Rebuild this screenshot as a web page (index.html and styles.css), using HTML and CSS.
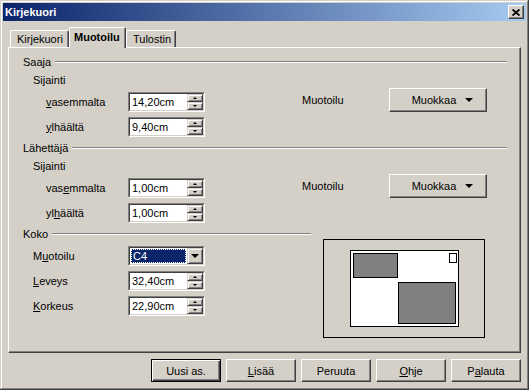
FILE: index.html
```html
<!DOCTYPE html>
<html lang="fi">
<head>
  <meta charset="UTF-8" />
  <title>Kirjekuori</title>
  <link rel="stylesheet" href="styles.css">
</head>
<body>

  <div class="window">
    <div class="titlebar">
      <span class="title">Kirjekuori</span>
      <span class="close-btn">
        <svg width="8" height="7" viewBox="0 0 8 7">
          <path d="M0.5 0.5 L7.5 6.5 M7.5 0.5 L0.5 6.5" stroke="#000" stroke-width="1.8" fill="none"/>
        </svg>
      </span>
    </div>

    <div class="content">
      <!-- Tabs -->
      <div class="tabs">
        <div class="tab">Kirjekuori</div>
        <div class="tab active">Muotoilu</div>
        <div class="tab">Tulostin</div>
      </div>

      <div class="panel">
        <!-- Saaja -->
        <div class="group">
          <div class="group-title"><span>Saaja</span></div>
          <div class="group-body">
            <div class="fields">
              <div class="sub">Sijainti</div>
              <div class="row">
                <span class="row-label"><u>v</u>asemmalta</span>
                <div class="spin"><div class="spin-inner">
                  <span class="spin-value">14,20cm</span>
                  <span class="spin-btns"><span class="spin-up"><i></i></span><span class="spin-down"><i></i></span></span>
                </div></div>
              </div>
              <div class="row">
                <span class="row-label"><u>y</u>lhäältä</span>
                <div class="spin"><div class="spin-inner">
                  <span class="spin-value">9,40cm</span>
                  <span class="spin-btns"><span class="spin-up"><i></i></span><span class="spin-down"><i></i></span></span>
                </div></div>
              </div>
            </div>
            <div class="side">
              <span class="side-label">Muotoilu</span>
              <div class="btn menu-btn"><span>Muokkaa</span><i class="menu-arrow"></i></div>
            </div>
          </div>
        </div>

        <!-- Lähettäjä -->
        <div class="group">
          <div class="group-title"><span>Lähettäjä</span></div>
          <div class="group-body">
            <div class="fields">
              <div class="sub">Sijainti</div>
              <div class="row">
                <span class="row-label">vas<u>e</u>mmalta</span>
                <div class="spin"><div class="spin-inner">
                  <span class="spin-value">1,00cm</span>
                  <span class="spin-btns"><span class="spin-up"><i></i></span><span class="spin-down"><i></i></span></span>
                </div></div>
              </div>
              <div class="row">
                <span class="row-label">yl<u>h</u>äältä</span>
                <div class="spin"><div class="spin-inner">
                  <span class="spin-value">1,00cm</span>
                  <span class="spin-btns"><span class="spin-up"><i></i></span><span class="spin-down"><i></i></span></span>
                </div></div>
              </div>
            </div>
            <div class="side">
              <span class="side-label">Muotoilu</span>
              <div class="btn menu-btn"><span>Muokkaa</span><i class="menu-arrow"></i></div>
            </div>
          </div>
        </div>

        <!-- Koko -->
        <div class="group size-group">
          <div class="size-fields">
            <div class="group-title"><span>Koko</span></div>
            <div class="row size-row">
              <span class="row-label">M<u>u</u>otoilu</span>
              <div class="spin"><div class="spin-inner">
                <span class="combo-value"><span>C4</span></span>
                <span class="combo-btn"><i></i></span>
              </div></div>
            </div>
            <div class="row size-row">
              <span class="row-label"><u>L</u>eveys</span>
              <div class="spin"><div class="spin-inner">
                <span class="spin-value">32,40cm</span>
                <span class="spin-btns"><span class="spin-up"><i></i></span><span class="spin-down"><i></i></span></span>
              </div></div>
            </div>
            <div class="row size-row">
              <span class="row-label"><u>K</u>orkeus</span>
              <div class="spin"><div class="spin-inner">
                <span class="spin-value">22,90cm</span>
                <span class="spin-btns"><span class="spin-up"><i></i></span><span class="spin-down"><i></i></span></span>
              </div></div>
            </div>
          </div>

          <div class="preview">
            <div class="envelope">
              <div class="env-sender"></div>
              <div class="env-stamp"></div>
              <div class="env-recipient"></div>
            </div>
          </div>
        </div>
      </div>

      <!-- Dialog buttons -->
      <div class="footer">
        <div class="btn dlg-btn default">Uusi as.</div>
        <div class="btn dlg-btn"><u>L</u>isää</div>
        <div class="btn dlg-btn">Peruuta</div>
        <div class="btn dlg-btn"><u>O</u>hje</div>
        <div class="btn dlg-btn">P<u>a</u>lauta</div>
      </div>
    </div>
  </div>

</body>
</html>
```

FILE: styles.css
```css
body {
  margin: 0;
  font-family: "Liberation Sans", Arial, sans-serif;
  font-size: 11px;
  color: #000;
  background: #d4d0c8;
}
u {
  text-decoration: underline;
  text-underline-offset: 1px;
}

.window {
  width: 529px;
  height: 390px;
  box-sizing: border-box;
  padding: 3px;
  background: #d4d0c8;
  box-shadow: inset -1px -1px #404040, inset 1px 1px #d4d0c8, inset -2px -2px #808080, inset 2px 2px #fff;
  display: flex;
  flex-direction: column;
}

/* title bar */
.titlebar {
  height: 18px;
  flex: none;
  display: flex;
  align-items: center;
  justify-content: space-between;
  padding: 0 2px 0 2px;
  background: linear-gradient(to right, #0a246a, #a6caf0);
}
.title {
  color: #fff;
  font-weight: bold;
}
.close-btn {
  width: 14px;
  height: 12px;
  display: flex;
  align-items: center;
  justify-content: center;
  background: #d4d0c8;
  border: 1px solid;
  border-color: #fff #404040 #404040 #fff;
  box-shadow: inset -1px -1px #808080;
}

.content {
  flex: 1;
  display: flex;
  flex-direction: column;
  padding: 0 5px;
}

/* tabs */
.tabs {
  height: 26px;
  flex: none;
  display: flex;
  align-items: flex-end;
  padding-left: 2px;
}
.tab {
  height: 17px;
  line-height: 17px;
  padding: 0 6px;
  box-sizing: border-box;
  border: 1px solid;
  border-bottom: none;
  border-color: #fff #404040 transparent #fff;
  border-radius: 2px 2px 0 0;
  box-shadow: inset -1px 0 #808080;
}
.tab:nth-child(1) { width: 59px; }
.tab:nth-child(3) { width: 50px; }
.tab.active {
  width: 57px;
  height: 21px;
  line-height: 19px;
  margin-bottom: -1px;
  padding: 0 4px;
  font-weight: bold;
  background: #d4d0c8;
  position: relative;
  z-index: 1;
}

/* panel */
.panel {
  height: 306px;
  flex: none;
  box-sizing: border-box;
  padding: 5px 13px 0 14px;
  border: 1px solid;
  border-color: #fff #404040 #404040 #fff;
  box-shadow: inset -1px -1px #808080;
}

.group-title {
  height: 18px;
  display: flex;
  align-items: center;
}
.group-title::after {
  content: "";
  flex: 1;
  height: 1px;
  margin-left: 4px;
  border-top: 1px solid #808080;
  border-bottom: 1px solid #fff;
  height: 0;
}
.group-body {
  display: flex;
}
.fields {
  width: 279px;
  flex: none;
}
.sub {
  height: 18px;
  line-height: 18px;
  padding-left: 10px;
}
.row {
  height: 25px;
  display: flex;
  align-items: center;
  padding-left: 23px;
}
.row-label {
  width: 82px;
  flex: none;
}

/* spin field */
.spin {
  width: 77px;
  height: 20px;
  box-sizing: border-box;
  border: 1px solid;
  border-color: #808080 #fff #fff #808080;
}
.spin-inner {
  height: 100%;
  box-sizing: border-box;
  border: 1px solid;
  border-color: #404040 #d4d0c8 #d4d0c8 #404040;
  background: #fff;
  display: flex;
}
.spin-value {
  flex: 1;
  line-height: 16px;
  padding-left: 2px;
}
.spin-btns {
  width: 16px;
  display: flex;
  flex-direction: column;
}
.spin-up, .spin-down {
  flex: 1;
  box-sizing: border-box;
  background: #d4d0c8;
  border: 1px solid;
  border-color: #d4d0c8 #404040 #404040 #d4d0c8;
  box-shadow: inset 1px 1px #fff, inset -1px -1px #808080;
  display: flex;
  align-items: center;
  justify-content: center;
}
.spin-up i {
  border-left: 2px solid transparent;
  border-right: 2px solid transparent;
  border-bottom: 2px solid #000;
}
.spin-down i {
  border-left: 2px solid transparent;
  border-right: 2px solid transparent;
  border-top: 2px solid #000;
}

/* combo box */
.combo-value {
  flex: 1;
  padding: 1px;
  display: flex;
}
.combo-value span {
  flex: 1;
  background: #0a246a;
  color: #fff;
  line-height: 12px;
  padding-left: 1px;
  outline: 1px dotted #fff;
  outline-offset: -1px;
  border: 1px dotted #000;
}
.combo-btn {
  width: 16px;
  box-sizing: border-box;
  background: #d4d0c8;
  border: 1px solid;
  border-color: #d4d0c8 #404040 #404040 #d4d0c8;
  box-shadow: inset 1px 1px #fff, inset -1px -1px #808080;
  display: flex;
  align-items: center;
  justify-content: center;
}
.combo-btn i {
  border-left: 4px solid transparent;
  border-right: 4px solid transparent;
  border-top: 4px solid #000;
}

/* right side */
.side {
  display: flex;
  align-items: center;
  margin-top: 17px;
  height: 24px;
}
.side-label {
  width: 87px;
}

.btn {
  box-sizing: border-box;
  background: #d4d0c8;
  border: 1px solid;
  border-color: #fff #404040 #404040 #fff;
  box-shadow: inset -1px -1px #808080;
  display: flex;
  align-items: center;
  justify-content: center;
}
.menu-btn {
  width: 98px;
  height: 24px;
  position: relative;
  padding-right: 8px;
}
.menu-arrow {
  position: absolute;
  right: 13px;
  top: 9px;
  border-left: 4px solid transparent;
  border-right: 4px solid transparent;
  border-top: 4px solid #000;
}

/* size group */
.size-group {
  display: flex;
}
.size-fields {
  width: 288px;
  flex: none;
}
.size-row {
  padding-left: 10px;
}
.size-row .row-label {
  width: 95px;
}
.preview {
  width: 162px;
  height: 99px;
  margin: 14px 0 0 12px;
  box-sizing: border-box;
  border: 1px solid #000;
  display: flex;
  align-items: center;
  justify-content: center;
}
.envelope {
  width: 109px;
  height: 77px;
  box-sizing: border-box;
  border: 1px solid #000;
  background: #fff;
  position: relative;
}
.env-sender, .env-recipient, .env-stamp {
  position: absolute;
  box-sizing: border-box;
  border: 1px solid #000;
  background: #808080;
}
.env-sender {
  left: 2px;
  top: 2px;
  width: 45px;
  height: 25px;
}
.env-recipient {
  left: 47px;
  top: 31px;
  width: 58px;
  height: 42px;
}
.env-stamp {
  left: 98px;
  top: 2px;
  width: 8px;
  height: 10px;
  background: #fff;
}

/* footer buttons */
.footer {
  flex: 1;
  display: flex;
  justify-content: flex-end;
  gap: 5px;
  padding-top: 6px;
}
.dlg-btn {
  width: 70px;
  height: 23px;
}
.dlg-btn.default {
  border-color: #000;
  box-shadow: inset 1px 1px #fff, inset -1px -1px #404040, inset -2px -2px #808080;
}
```
